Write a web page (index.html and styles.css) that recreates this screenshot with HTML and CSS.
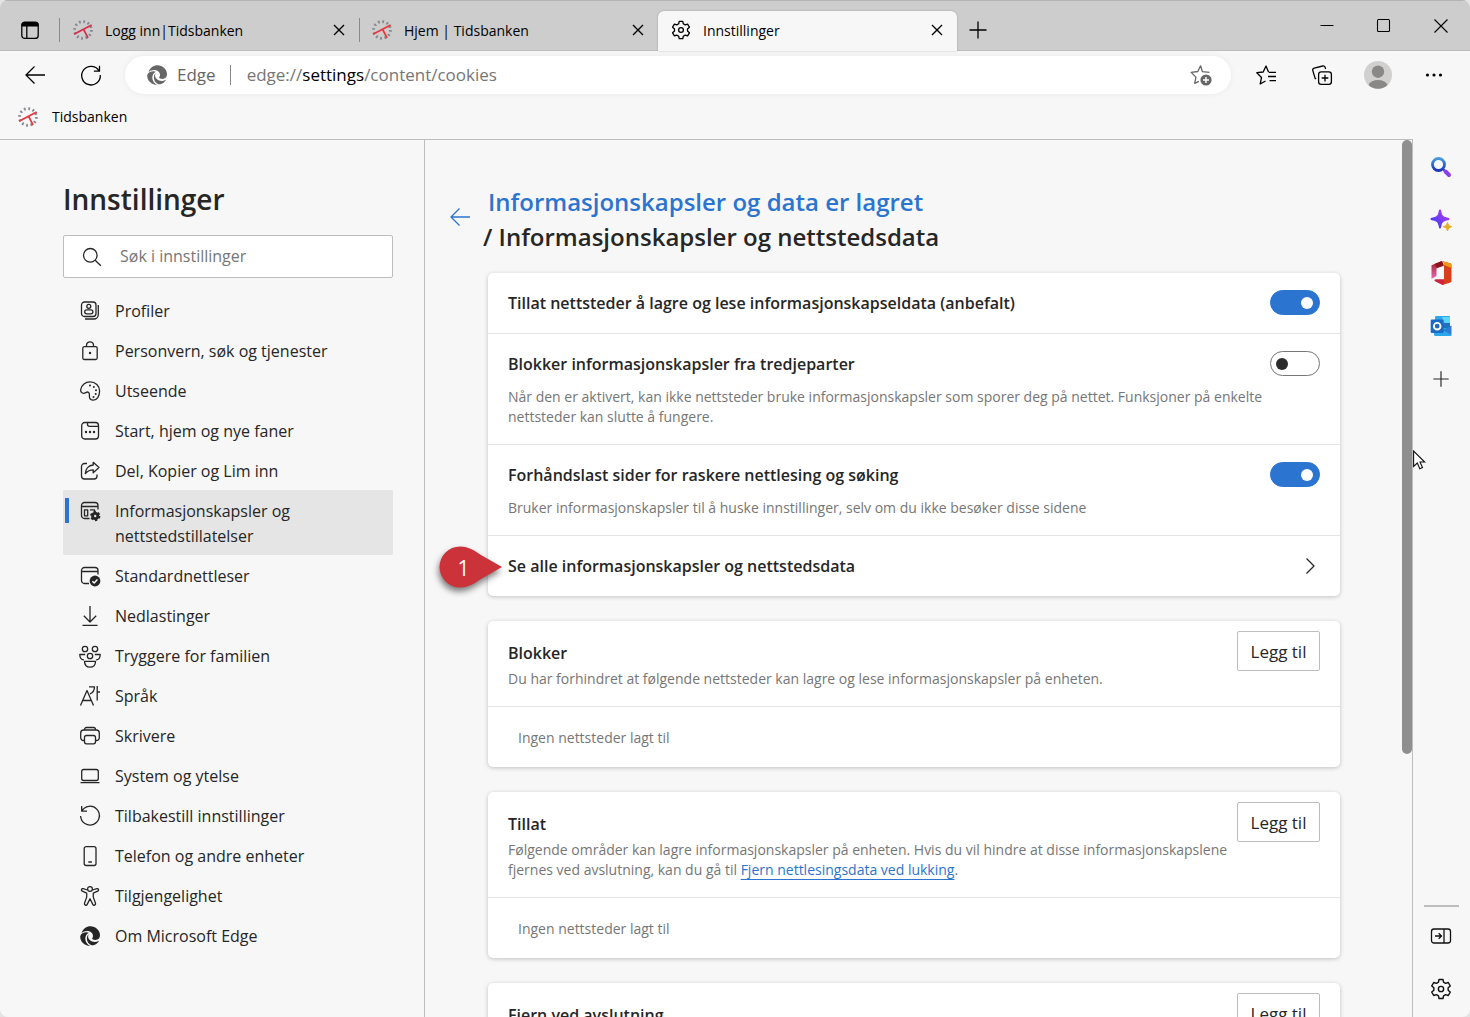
FILE: index.html
```html
<!DOCTYPE html>
<html lang="nb">
<head>
    <meta charset="UTF-8">
    <meta name="viewport" content="width=device-width, initial-scale=1.0">
    <title>Innstillinger</title>
    <link rel="stylesheet" href="styles.css">
</head>
<body>
    <!-- Shared icons -->
    <svg class="sprite" aria-hidden="true">
        <symbol id="i-gear" viewBox="0 0 20 20">
            <path d="M7.7 3.8 8.2 1.3h3.6l.5 2.5 1.9 1.1 2.4-.8 1.8 3.1-1.9 1.7v2.2l1.9 1.7-1.8 3.1-2.4-.8-1.9 1.1-.5 2.5H8.2l-.5-2.5-1.9-1.1-2.4.8-1.8-3.1 1.9-1.7V8.9L1.6 7.2l1.8-3.1 2.4.8z"/>
            <circle cx="10" cy="10" r="2.4"/>
        </symbol>
        <symbol id="i-close" viewBox="0 0 20 20"><path d="M5 5l10 10M15 5L5 15"/></symbol>
        <symbol id="i-plus" viewBox="0 0 20 20"><path d="M10 1.5v17M1.5 10h17"/></symbol>
        <symbol id="i-back" viewBox="0 0 20 20"><path d="M9.5 1.5L1 10l8.5 8.5M1 10h19"/></symbol>
        <symbol id="i-bank" viewBox="0 0 20 20">
            <circle class="ticks" cx="10" cy="10" r="8.4"/>
            <path class="hands" d="M1 14.2L18.6 5M10.6 9.4l4.4 8.4"/>
        </symbol>
        <symbol id="i-edge" viewBox="0 0 20 20">
            <path d="M1.5 7.2C3 2.8 6.5.3 10.5.3 15.5.3 20 4.3 20 9.3c0 2.8-2 4.7-4.6 4.7-2 0-3.3-.8-3.3-1.4 0-.4.9-1 .9-2.6C13 7.3 10.5 5 7.3 5 4.8 5 2.8 5.8 1.5 7.2z"/>
            <path d="M.2 10.2C.8 7.8 3.5 6.2 6.5 6.2c.9 0 1.7.2 2.3.5C6.8 7.6 5.3 9.8 5.3 12.5c0 3.3 2 6.2 5 7.3C4.7 20 0 15.7.2 10.2z"/>
            <path d="M6.9 12.5c0-1.8.7-3.3 1.7-4.2-.2.5-.5 1.2-.5 2 0 3.2 3 5.7 6.7 5.7 1.3 0 2.4-.3 3.6-.9.3-.2.5 0 .3.3-1.3 2-3.3 3.3-5.4 3.9C9.6 19.5 6.9 16.2 6.9 12.5z"/>
        </symbol>
    </svg>

    <div class="window">
        <!-- Tabs -->
        <div class="titlebar">
            <button class="tab-menu" aria-label="Fanehandlinger">
                <svg class="icon" viewBox="0 0 20 20"><rect x="1.8" y="2.2" width="16.4" height="16.2" rx="3"/><path d="M6.8 6v12"/><path class="solid" d="M1.5 6.5V5a3 3 0 0 1 3-3h11a3 3 0 0 1 3 3v1.5z"/></svg>
            </button>
            <div class="tab">
                <svg class="icon bank bank-soft"><use href="#i-bank"/></svg>
                <span class="tab-title">Logg inn|Tidsbanken</span>
                <button class="tab-close" aria-label="Lukk fane"><svg class="icon"><use href="#i-close"/></svg></button>
            </div>
            <div class="tab">
                <svg class="icon bank"><use href="#i-bank"/></svg>
                <span class="tab-title">Hjem | Tidsbanken</span>
                <button class="tab-close" aria-label="Lukk fane"><svg class="icon"><use href="#i-close"/></svg></button>
            </div>
            <div class="tab active">
                <svg class="icon"><use href="#i-gear"/></svg>
                <span class="tab-title">Innstillinger</span>
                <button class="tab-close" aria-label="Lukk fane"><svg class="icon"><use href="#i-close"/></svg></button>
            </div>
            <button class="new-tab" aria-label="Ny fane"><svg class="icon"><use href="#i-plus"/></svg></button>
            <div class="window-controls">
                <button aria-label="Minimer"><svg class="icon" viewBox="0 0 20 20"><path d="M3.5 9.5h13"/></svg></button>
                <button aria-label="Maksimer"><svg class="icon" viewBox="0 0 20 20"><rect x="3.5" y="3.5" width="12" height="12" rx="1"/></svg></button>
                <button aria-label="Lukk"><svg class="icon" viewBox="0 0 20 20"><path d="M3.5 3.5l13 13M16.5 3.5l-13 13"/></svg></button>
            </div>
        </div>

        <!-- Toolbar -->
        <div class="toolbar">
            <button class="tool" aria-label="Tilbake"><svg class="icon"><use href="#i-back"/></svg></button>
            <button class="tool" aria-label="Oppdater"><svg class="icon" viewBox="0 0 20 20"><path d="M18.2 6.2A9.3 9.3 0 1 0 19.3 10M18.5 .8v5.4h-5.6"/></svg></button>
            <div class="address">
                <svg class="icon fill"><use href="#i-edge"/></svg>
                <span class="address-app">Edge</span>
                <div class="address-url" role="textbox" contenteditable="true" spellcheck="false" aria-label="Adresse">edge://<b>settings</b>/content/cookies</div>
                <button class="address-star" aria-label="Legg til favoritt">
                    <svg class="icon" viewBox="0 0 22 22"><path d="M12.5 8L10.6 1.8 7.8 7.5 1.2 8.4l4.7 4.7-1.2 6.3 4.2-2.1M12.5 7.6l7 .8"/><circle class="solid" cx="16" cy="16" r="5.6"/><path class="cut" d="M16 13v6M13 16h6"/></svg>
                </button>
            </div>
            <button class="tool" aria-label="Favoritter"><svg class="icon" viewBox="0 0 20 20"><path d="M12.6 7.2L10 1 7.2 7 .8 7.7l4.7 4.8L4.2 19l5.3-3M13 7.3h7M12 11.5h8M13.5 15.7H20"/></svg></button>
            <button class="tool" aria-label="Samlinger"><svg class="icon" viewBox="0 0 20 20"><rect x="6.6" y="6.8" width="12.8" height="12.6" rx="2.6"/><path d="M13 9.8v6.6M9.7 13h6.6M13.6 4l-.4-1.4A2 2 0 0 0 10.8 1L2.2 3.2A2 2 0 0 0 .8 5.6l2.3 7.6 1 .9"/></svg></button>
            <button class="tool" aria-label="Profil"><svg class="avatar" viewBox="0 0 28 28"><circle cx="14" cy="14" r="14" fill="#d2d0ce"/><circle cx="14" cy="10.7" r="6.2" fill="#8a8886"/><path d="M4.5 24a9.7 6.2 0 0 1 19 0 14 14 0 0 1-19 0z" fill="#8a8886"/></svg></button>
            <button class="tool" aria-label="Mer"><svg class="icon fill" viewBox="0 0 20 20"><circle cx="3.5" cy="10" r="1.6"/><circle cx="10" cy="10" r="1.6"/><circle cx="16.5" cy="10" r="1.6"/></svg></button>
        </div>

        <div class="bookmarks">
            <a class="bookmark" href="#"><svg class="icon bank"><use href="#i-bank"/></svg>Tidsbanken</a>
        </div>

        <div class="content">
            <!-- Settings menu -->
            <aside class="settings-nav">
                <h2>Innstillinger</h2>
                <div class="search">
                    <svg class="icon" viewBox="0 0 20 20"><circle cx="8.3" cy="8.3" r="6.8"/><path d="M13.2 13.2l5.6 5.6"/></svg>
                    <input type="text" placeholder="Søk i innstillinger" aria-label="Søk i innstillinger">
                </div>
                <nav>
                    <a class="nav-item" href="#"><svg class="icon" viewBox="0 0 20 20"><rect x="1.5" y="1" width="14.5" height="14.5" rx="3"/><circle cx="8.8" cy="5.3" r="2"/><rect x="4.7" y="8.8" width="8.2" height="4" rx="2"/><path d="M18.3 4v9.5a4.5 4.5 0 0 1-4.5 4.5H5"/></svg>Profiler</a>
                    <a class="nav-item" href="#"><svg class="icon" viewBox="0 0 20 20"><rect x="2.8" y="5.7" width="14.4" height="12.8" rx="1.5"/><path d="M6.5 5.7V4.3a3.5 3.5 0 0 1 7 0v1.4"/><circle class="solid" cx="10" cy="12" r="1.2"/></svg>Personvern, søk og tjenester</a>
                    <a class="nav-item" href="#"><svg class="icon" viewBox="0 0 20 20"><path d="M.7 8.5C1.5 3.8 5.5.8 10 .8c5.5 0 9.6 4 9.6 9.3 0 5-2.8 9.1-6.3 9.1-2.6 0-4.1-1.8-3.9-4.2.2-2.3-.2-4-2-4-1.3 0-2 1.3-3.7 1.3C1.5 12.3.4 10.5.7 8.5z"/><g class="solid"><circle cx="10" cy="4.5" r="1"/><circle cx="13.8" cy="6" r="1"/><circle cx="16" cy="9.3" r="1"/><circle cx="15.7" cy="13" r="1"/><circle cx="13.5" cy="16" r="1"/></g></svg>Utseende</a>
                    <a class="nav-item" href="#"><svg class="icon" viewBox="0 0 20 20"><rect x="1.7" y="1.5" width="16.8" height="16.5" rx="3"/><path d="M7.5 1.5v1.8a2 2 0 0 0 2 2h8.8"/><g class="solid"><circle cx="6" cy="11" r="1.2"/><circle cx="10" cy="11" r="1.2"/><circle cx="14" cy="11" r="1.2"/></g></svg>Start, hjem og nye faner</a>
                    <a class="nav-item" href="#"><svg class="icon" viewBox="0 0 20 20"><path d="M7 2.5H4.5a3 3 0 0 0-3 3V15a3 3 0 0 0 3 3H14a3 3 0 0 0 3-3v-1.5"/><path d="M13.2 1.3L19 6.5l-5.8 5.2V8.8C9.7 8.8 7.5 10 5.3 12.5 5.6 8 8.5 4.3 13.2 4z"/></svg>Del, Kopier og Lim inn</a>
                    <a class="nav-item active" href="#"><svg class="icon" viewBox="0 0 20 20"><path d="M9.5 17.5h-5a3 3 0 0 1-3-3v-10a3 3 0 0 1 3-3H15a3 3 0 0 1 3 3v4M1.5 5.5H18M10 8.8h4.5v1.5"/><rect x="4.5" y="8.8" width="3.2" height="6"/><circle class="gear-teeth" cx="15.2" cy="15" r="3.9"/><circle class="gear-core" cx="15.2" cy="15" r="2.6"/></svg>Informasjonskapsler og nettstedstillatelser</a>
                    <a class="nav-item" href="#"><svg class="icon" viewBox="0 0 20 20"><path d="M9 17.5H4.5a3 3 0 0 1-3-3v-10a3 3 0 0 1 3-3H15a3 3 0 0 1 3 3v4M1.5 5.5H18"/><circle class="solid" cx="15" cy="15" r="5.4"/><path class="cut" d="M12.4 15.2l1.8 1.8 3.2-3.5"/></svg>Standardnettleser</a>
                    <a class="nav-item" href="#"><svg class="icon" viewBox="0 0 20 20"><path d="M10 0v15.5M3.8 9.8L10 16l6.2-6.2M2.5 19.3h15"/></svg>Nedlastinger</a>
                    <a class="nav-item" href="#"><svg class="icon icon-wide" viewBox="0 0 22 22"><circle cx="6" cy="3" r="2.7"/><circle cx="16" cy="3" r="2.7"/><circle cx="11" cy="10" r="2.7"/><path d="M6.2 8.5H.8C.8 12.2 2.5 14 5 13.8M15.8 8.5h5.4c0 3.7-1.7 5.5-4.2 5.3M5.5 15.3h11c0 3.6-2.2 5.9-5.5 5.9s-5.5-2.3-5.5-5.9z"/></svg>Tryggere for familien</a>
                    <a class="nav-item" href="#"><svg class="icon" viewBox="0 0 20 20"><path d="M.5 19.5L7 4.5l6.5 15M3 14.5h8.2M9 .8h5.5c0 3.500-1.5 6-4.5 7M17.2 0v14.5M17.2 6H20"/></svg>Språk</a>
                    <a class="nav-item" href="#"><svg class="icon" viewBox="0 0 20 20"><path d="M4.5 14.5h-1a2.8 2.8 0 0 1-2.8-2.8V7a3 3 0 0 1 3-3h12.6a3 3 0 0 1 3 3v4.7a2.8 2.8 0 0 1-2.8 2.8h-1M4.5 4V3.5a2 2 0 0 1 2-2h7a2 2 0 0 1 2 2V4"/><rect x="4.5" y="9.5" width="11" height="8.3" rx="2"/></svg>Skrivere</a>
                    <a class="nav-item" href="#"><svg class="icon" viewBox="0 0 20 20"><rect x="1.7" y="3.5" width="16.6" height="11" rx="2"/><path d="M.5 16.7h19"/></svg>System og ytelse</a>
                    <a class="nav-item" href="#"><svg class="icon" viewBox="0 0 20 20"><path d="M1.7 5.2A9.4 9.4 0 1 1 .6 10M1.7 0v5.2H7"/></svg>Tilbakestill innstillinger</a>
                    <a class="nav-item" href="#"><svg class="icon" viewBox="0 0 20 20"><rect x="4.2" y=".7" width="11.8" height="18.8" rx="2"/><path d="M8.3 16h3.6"/></svg>Telefon og andre enheter</a>
                    <a class="nav-item" href="#"><svg class="icon" viewBox="0 0 20 20"><circle cx="10" cy="3" r="2.4"/><path d="M7.5 4L3.2 2.7C1.2 2.3.9 4.6 2.3 5.2l4.4 1.9v4L4.5 17.2c-.5 2 1.9 2.8 2.7 1.2L10 12.8l2.8 5.6c.8 1.6 3.2.8 2.7-1.2l-2.2-6.1v-4l4.4-1.9c1.4-.6 1.1-2.9-.9-2.5L12.5 4"/></svg>Tilgjengelighet</a>
                    <a class="nav-item" href="#"><svg class="icon fill"><use href="#i-edge"/></svg>Om Microsoft Edge</a>
                </nav>
            </aside>

            <!-- Cookie settings -->
            <main class="settings-main">
                <header class="page-header">
                    <button class="page-back" aria-label="Gå tilbake"><svg class="icon"><use href="#i-back"/></svg></button>
                    <h1><a href="#">Informasjonskapsler og data er lagret</a> / Informasjonskapsler og nettstedsdata</h1>
                </header>

                <section class="card">
                    <div class="row">
                        <label class="row-text" for="allow-cookies">Tillat nettsteder å lagre og lese informasjonskapseldata (anbefalt)</label>
                        <input class="toggle" type="checkbox" id="allow-cookies" checked>
                    </div>
                    <div class="row">
                        <div class="row-text">
                            <label for="block-third">Blokker informasjonskapsler fra tredjeparter</label>
                            <p>Når den er aktivert, kan ikke nettsteder bruke informasjonskapsler som sporer deg på nettet. Funksjoner på enkelte nettsteder kan slutte å fungere.</p>
                        </div>
                        <input class="toggle" type="checkbox" id="block-third">
                    </div>
                    <div class="row">
                        <div class="row-text">
                            <label for="preload">Forhåndslast sider for raskere nettlesing og søking</label>
                            <p>Bruker informasjonskapsler til å huske innstillinger, selv om du ikke besøker disse sidene</p>
                        </div>
                        <input class="toggle" type="checkbox" id="preload" checked>
                    </div>
                    <a class="row row-link" href="#">
                        <span class="row-text">Se alle informasjonskapsler og nettstedsdata</span>
                        <svg class="icon" viewBox="0 0 20 20"><path d="M6.5 2.5L14 10l-7.5 7.5"/></svg>
                        <span class="pin">
                            <svg viewBox="0 0 64 42"><path d="M21 .5C30 .5 36 5 42 9l21 12-21 12c-6 4-12 8.5-21 8.5a20.5 20.5 0 0 1 0-41z"/></svg>
                            <span>1</span>
                        </span>
                    </a>
                </section>

                <section class="card">
                    <div class="list-head">
                        <div class="list-text">
                            <h3>Blokker</h3>
                            <p>Du har forhindret at følgende nettsteder kan lagre og lese informasjonskapsler på enheten.</p>
                        </div>
                        <button class="add-btn">Legg til</button>
                    </div>
                    <p class="empty">Ingen nettsteder lagt til</p>
                </section>

                <section class="card">
                    <div class="list-head">
                        <div class="list-text">
                            <h3>Tillat</h3>
                            <p>Følgende områder kan lagre informasjonskapsler på enheten. Hvis du vil hindre at disse informasjonskapslene fjernes ved avslutning, kan du gå til <a href="#">Fjern nettlesingsdata ved lukking</a>.</p>
                        </div>
                        <button class="add-btn">Legg til</button>
                    </div>
                    <p class="empty">Ingen nettsteder lagt til</p>
                </section>

                <section class="card">
                    <div class="list-head">
                        <div class="list-text">
                            <h3>Fjern ved avslutning</h3>
                        </div>
                        <button class="add-btn">Legg til</button>
                    </div>
                </section>
            </main>
            <div class="scrollbar"><div class="scroll-thumb"></div></div>

            <!-- Edge sidebar -->
            <aside class="rail">
                <button aria-label="Søk">
                    <svg viewBox="0 0 22 22">
                        <defs><linearGradient id="g-lens" x1="0" y1="0" x2="0" y2="1"><stop offset="0" stop-color="#4a9ad8"/><stop offset="1" stop-color="#1a35c4"/></linearGradient></defs>
                        <path d="M13.5 13.5l2 2" stroke="#3a3a52" stroke-width="2"/><path d="M15.5 15.5L19 19" stroke="#8a3ff0" stroke-width="4" stroke-linecap="round"/><circle cx="8.5" cy="8.5" r="6" fill="#f7fbff" stroke="url(#g-lens)" stroke-width="2.8"/>
                    </svg>
                </button>
                <button aria-label="Oppdag">
                    <svg viewBox="0 0 22 22">
                        <defs><linearGradient id="g-spark" x1="0" y1="1" x2="1" y2="0"><stop offset="0" stop-color="#2a3bf0"/><stop offset="1" stop-color="#c53df5"/></linearGradient></defs>
                        <path d="M10 .5c.8 0 1 .6 1.3 2 .8 4 1.7 5 5.7 5.9 1.8.4 2.5.7 2.5 1.5s-.7 1.1-2.5 1.5c-4 .9-4.9 1.8-5.7 5.8-.3 1.4-.5 2.3-1.3 2.3s-1-.9-1.3-2.3c-.8-4-1.7-4.9-5.7-5.8C1.2 11 .5 10.7.5 9.9s.7-1.1 2.5-1.5c4-.9 4.9-1.9 5.7-5.9.3-1.4.5-2 1.3-2z" fill="url(#g-spark)"/>
                        <path d="M17.5 13.5l1.2 3 3 1.2-3 1.2-1.2 3-1.2-3-3-1.2 3-1.2z" fill="#e8ad26" stroke="#e8ad26" stroke-linejoin="round"/>
                    </svg>
                </button>
                <button aria-label="Office">
                    <svg class="office" viewBox="0 0 22 24">
                        <defs><linearGradient id="g-office" x1="0" y1="0" x2="0" y2="1"><stop offset="0" stop-color="#a01d22"/><stop offset="1" stop-color="#e56bb8"/></linearGradient></defs>
                        <path d="M12 0L1.5 4.2v13.5l3.7-1.8c1-.5 1.3-1.2 1.3-2.2V8.3c0-.7.3-1.2 1-1.5L13 5z" fill="url(#g-office)"/>
                        <path d="M12 0L4.5 3l2.5 4L14 4.5z" fill="#8f1219"/>
                        <path d="M6 18.3h8v5.5l-1.5.2L5 20.2c-1-.6-.6-1.9 1-1.9z" fill="#cf2340"/>
                        <path d="M12 0l8 2.3c1 .3 1.5 1 1.5 1.9v15.6c0 .9-.5 1.6-1.5 1.9L12 24c1.3-.5 2-1.2 2-2.5V2.5C14 1.2 13.3.4 12 0z" fill="#d8401c"/>
                        <path d="M12 0l8 2.3c1 .3 1.5 1 1.5 1.9V7L14 4V2.5C14 1.2 13.3.4 12 0z" fill="#ee9a12"/>
                    </svg>
                </button>
                <button aria-label="Outlook">
                    <svg viewBox="0 0 22 22">
                        <rect x="5" y="1" width="15" height="17" rx="1" fill="#32a9e7"/><path d="M12.5 2H20v6h-7.5z" fill="#5fd3fb"/><path d="M12.5 8H20v5h-7.5z" fill="#2072bd"/>
                        <path d="M4 12h9l8.5 8.5c-.3.5-.8.5-1.3.5H5.5A1.5 1.5 0 0 1 4 19.5z" fill="#28a8ea"/><path d="M21.5 10.5v9.8L13 15z" fill="#2c7cd0"/>
                        <rect x=".7" y="4.5" width="13" height="13.5" rx="1.2" fill="#1a6ac6"/><circle cx="7.2" cy="11.2" r="3.3" fill="none" stroke="#fff" stroke-width="1.9"/>
                    </svg>
                </button>
                <button aria-label="Legg til"><svg class="icon rail-plus"><use href="#i-plus"/></svg></button>
                <div class="rail-line"></div>
                <button aria-label="Skjul sidefelt"><svg viewBox="0 0 22 22"><rect x="1.5" y="4" width="19" height="14" rx="2.5"/><path d="M14 4v14M5 11h6.5M8.7 8.2l2.8 2.8-2.8 2.8"/></svg></button>
                <button aria-label="Innstillinger for sidefelt"><svg class="icon"><use href="#i-gear"/></svg></button>
                <svg class="cursor" viewBox="0 0 13 20"><path d="M.6 1v15.5l3.7-3.5 2.5 5.7 2.7-1.2L7 12h4.7z"/></svg>
            </aside>
        </div>
    </div>
</body>
</html>
```

FILE: styles.css
```css
/* General */
* {
    box-sizing: border-box;
}

body {
    margin: 0;
    font-family: "Segoe UI", "Open Sans", "Noto Sans", sans-serif;
    font-size: 16px;
    line-height: 25px;
    color: #262626;
    background: #e4e4e4;
}

h1,
h2,
h3,
p {
    margin: 0;
}

a {
    color: inherit;
    text-decoration: none;
}

button {
    padding: 0;
    border: none;
    background: none;
    font: inherit;
    color: inherit;
    cursor: pointer;
}

.window {
    display: flex;
    flex-direction: column;
    height: 100vh;
    background: #f7f7f7;
    border-radius: 8px;
    overflow: hidden;
}

/* Icons */
.sprite {
    display: none;
}

.icon {
    display: block;
    flex: none;
    width: 20px;
    height: 20px;
    fill: none;
    stroke: currentColor;
    stroke-width: 1.3;
    stroke-linejoin: round;
    overflow: visible;
}

.icon-wide {
    width: 22px;
    height: 22px;
    margin: 0 -1px;
}

.icon.fill {
    fill: currentColor;
    stroke: none;
}

.icon .solid {
    fill: currentColor;
    stroke: none;
}

.icon .cut {
    stroke: #fff;
    stroke-width: 1.4;
}

.gear-teeth {
    stroke-width: 2.5;
    stroke-dasharray: 2.1 2;
}

.gear-core {
    stroke-width: 2.8;
}

.bank {
    color: #e8383d;
}

.bank-soft {
    color: #d4304c;
}

.ticks {
    stroke: #85888f;
    stroke-width: 2.8;
    stroke-dasharray: 1.8 2.6;
}

.hands {
    stroke: currentColor;
    stroke-width: 1.8;
}

/* Title bar and tabs */
.titlebar {
    display: flex;
    flex: none;
    height: 51px;
    padding-top: 10px;
    background: #cdcdcd;
    border-top: 1px solid #b4b4b4;
    box-shadow: inset 0 -1px #bdbdbd;
    font-size: 14px;
    color: #000;
}

.tab-menu {
    display: flex;
    align-items: center;
    justify-content: center;
    width: 60px;
    height: 24px;
    margin-top: 7px;
    border-right: 1px solid #8a8a8a;
}

.tab {
    display: flex;
    align-items: center;
    flex: 0 1 299px;
    height: 38px;
    padding: 0 10px 0 13px;
}

.tab + .tab {
    background: linear-gradient(#8a8a8a, #8a8a8a) 0 7px / 1px 24px no-repeat;
}

.tab.active {
    height: 40px;
    padding-bottom: 2px;
    background: #f7f7f7;
    border-radius: 6px 6px 0 0;
    box-shadow: 0 0 2px rgba(0, 0, 0, 0.25);
}

.tab-title {
    flex: 1;
    padding-left: 12px;
    white-space: nowrap;
    overflow: hidden;
}

.tab-close .icon {
    stroke-width: 1.4;
}

.new-tab {
    height: 38px;
    margin-left: 11px;
}

.window-controls {
    display: flex;
    height: 28px;
    margin-left: auto;
    padding-right: 1px;
}

.window-controls button {
    display: flex;
    justify-content: center;
    width: 57px;
    padding-top: 5px;
}

.window-controls .icon {
    stroke-width: 1.1;
}

/* Toolbar */
.toolbar {
    display: flex;
    align-items: center;
    flex: none;
    height: 48px;
    padding: 0 8px 0 7px;
    color: #000;
}

.tool {
    display: flex;
    align-items: center;
    justify-content: center;
    width: 56px;
    height: 38px;
}

.avatar {
    width: 28px;
    height: 28px;
}

.address {
    display: flex;
    align-items: center;
    flex: 1;
    height: 38px;
    margin: 0 7px 0 6px;
    padding: 0 19px 0 22px;
    border-radius: 19px;
    background: #fff;
    box-shadow: 0 0 6px rgba(0, 0, 0, 0.06);
    font-size: 17px;
    color: #666;
}

.address-app {
    margin-left: 10px;
    padding-right: 14px;
    line-height: 20px;
    border-right: 1px solid #888;
}

.address-url {
    flex: 1;
    padding-left: 16px;
    line-height: 24px;
    color: #767676;
    outline: none;
}

.address-url b {
    font-weight: 400;
    color: #000;
}

.address-star .icon {
    width: 22px;
    height: 22px;
}

/* Bookmarks */
.bookmarks {
    display: flex;
    flex: none;
    height: 40px;
    padding: 5px 18px 10px;
    font-size: 14px;
    color: #000;
}

.bookmark {
    display: flex;
    align-items: center;
    gap: 14px;
}

/* Content */
.content {
    display: flex;
    flex: 1;
    min-height: 0;
}

.settings-nav {
    flex: 0 0 425px;
    padding: 40px 31px 0 63px;
    border-top: 1px solid #bdbdbd;
    border-right: 1px solid #bdbdbd;
}

.settings-nav h2 {
    font-size: 28px;
    line-height: 38px;
    font-weight: 600;
}

.search {
    display: flex;
    align-items: center;
    height: 43px;
    margin: 17px 0 12px;
    padding: 0 18px;
    border: 1px solid #bdbdbd;
    border-radius: 2px;
    background: #fff;
}

.search input {
    flex: 1;
    min-width: 0;
    padding: 0 0 0 18px;
    border: none;
    outline: none;
    font: inherit;
    background: none;
}

.search input::placeholder {
    color: #767676;
}

.nav-item {
    display: flex;
    align-items: flex-start;
    gap: 15px;
    padding: 9px 60px 6px 17px;
    border-radius: 2px;
}

.nav-item.active {
    background: linear-gradient(#2b74d0, #2b74d0) 2px 8px / 4px 25px no-repeat #e5e5e5;
}

.nav-item .icon {
    margin-top: 2px;
}

/* Main column */
.settings-main {
    flex: 1;
    padding: 44px 62px 0 25px;
    border-top: 1px solid #bdbdbd;
    overflow: hidden;
}

.page-header {
    display: flex;
    gap: 13px;
    margin-bottom: 19px;
}

.page-back {
    align-self: flex-start;
    margin-top: 23px;
    color: #2b74d0;
}

.page-header h1 {
    font-size: 24px;
    line-height: 35px;
    font-weight: 600;
}

.page-header h1 a {
    display: block;
    padding-left: 5px;
    color: #2b74d0;
}

.card {
    margin: 0 0 25px 38px;
    border-radius: 5px;
    background: #fff;
    box-shadow: 0 1px 4px rgba(0, 0, 0, 0.22);
}

.row {
    display: flex;
    align-items: flex-start;
    justify-content: space-between;
    padding: 17px 20px;
    line-height: 26px;
    font-weight: 600;
}

.row + .row {
    border-top: 1px solid #e5e5e5;
}

.card p {
    font-size: 14px;
    line-height: 20px;
    font-weight: 400;
    color: #767676;
}

.row p {
    margin-top: 10px;
}

.row-link {
    position: relative;
}

.row-link .icon {
    margin-top: 3px;
}

/* Toggle */
.toggle {
    appearance: none;
    display: flex;
    align-items: center;
    flex: none;
    width: 50px;
    height: 25px;
    margin: 0;
    padding: 0 5px;
    border: 1px solid #767676;
    border-radius: 13px;
    background: #fff;
    cursor: pointer;
}

.toggle::before {
    content: "";
    width: 12px;
    height: 12px;
    border-radius: 50%;
    background: #2b2b2b;
}

.toggle:checked {
    justify-content: flex-end;
    padding: 0 6px;
    border-color: #2b74d0;
    background: #2b74d0;
}

.toggle:checked::before {
    background: #fff;
}

/* Numbered marker */
.pin {
    position: absolute;
    left: -49px;
    top: 10px;
    width: 64px;
    height: 42px;
    color: #fff;
    font-size: 21px;
    font-weight: 400;
}

.pin svg {
    display: block;
    fill: #cb3239;
    filter: drop-shadow(-1px 4px 3px rgba(0, 0, 0, 0.5));
}

.pin span {
    position: absolute;
    left: 0;
    top: 9px;
    width: 49px;
    text-align: center;
}

/* Site lists */
.list-head {
    display: flex;
    align-items: flex-start;
    justify-content: space-between;
    padding: 10px 20px 17px;
    border-bottom: 1px solid #e5e5e5;
}

.list-text {
    padding-top: 9px;
}

.list-text h3 {
    margin-bottom: 3px;
    font-size: 16px;
    line-height: 26px;
    font-weight: 600;
}

.list-text a {
    color: #2b74d0;
    text-decoration: underline;
    text-underline-offset: 4px;
    text-decoration-skip-ink: none;
}

.add-btn {
    flex: none;
    width: 83px;
    height: 40px;
    border: 1px solid #bdbdbd;
    border-radius: 2px;
    background: #fff;
    font-size: 17px;
}

.card .empty {
    padding: 21px 30px 19px;
}

/* Scrollbar */
.scrollbar {
    flex: none;
    width: 11px;
    border-top: 1px solid #bdbdbd;
    border-right: 1px solid #bdbdbd;
}

.scroll-thumb {
    height: 70%;
    border-radius: 5px;
    background: #8f8f8f;
}

/* Sidebar */
.rail {
    position: relative;
    display: flex;
    flex-direction: column;
    align-items: center;
    flex: 0 0 57px;
    padding: 1px 1px 2px 0;
}

.rail button {
    display: flex;
    align-items: center;
    justify-content: center;
    width: 100%;
    height: 53px;
}

.rail button svg {
    width: 22px;
    height: 22px;
    fill: none;
}

.rail button .office {
    height: 24px;
}

.rail button:nth-last-of-type(-n+2) svg {
    stroke: #111;
    stroke-width: 1.3;
}

.rail button .rail-plus {
    width: 18px;
    height: 18px;
}

.rail-line {
    width: 35px;
    height: 2px;
    margin: auto 0 2px;
    background: #bdbdbd;
}

.cursor {
    position: absolute;
    left: 0;
    top: 311px;
    width: 13px;
    height: 20px;
    fill: #fff;
    stroke: #111;
    stroke-width: 1.1;
}
```
